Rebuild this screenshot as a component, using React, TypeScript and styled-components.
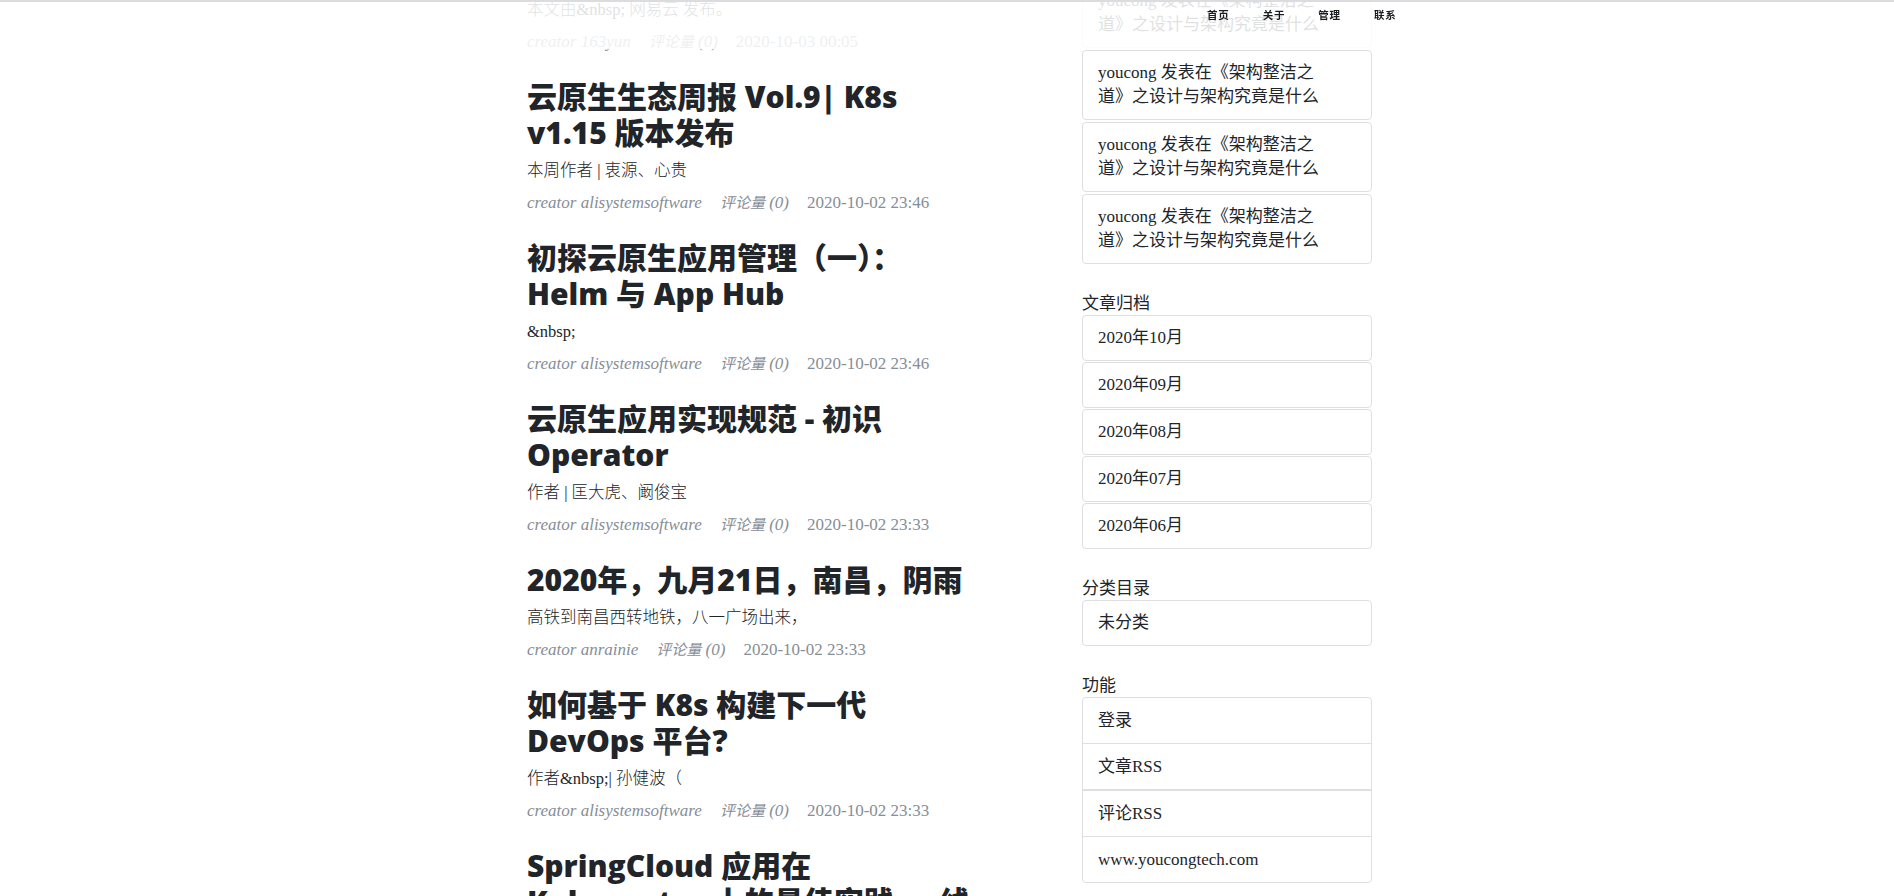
import React from "react";
import styled, { createGlobalStyle } from "styled-components";

const GlobalStyle = createGlobalStyle`
  html, body {
    margin: 0;
    padding: 0;
    overflow: hidden;
    background: #ffffff;
  }
  body {
    font-family: "Liberation Serif", "Noto Sans CJK SC", serif;
    color: #212529;
  }
  *, *::before, *::after { box-sizing: border-box; }
`;

const TopBar = styled.header`
  position: fixed;
  top: 0;
  left: 0;
  right: 0;
  height: 49px;
  background: rgba(255, 255, 255, 0.86);
  border-top: 2px solid #dcdce0;
  z-index: 10;
`;

const NavInner = styled.nav`
  width: 932px;
  margin: 0 auto;
  display: flex;
  justify-content: flex-end;
  padding-top: 6px;
`;

const NavLink = styled.a`
  font-family: "Open Sans", "Noto Sans CJK SC", sans-serif;
  font-size: 10.5px;
  font-weight: 700;
  letter-spacing: 0.8px;
  line-height: 14px;
  color: #1a1d20;
  padding: 0 16.5px;
  text-decoration: none;
`;

const Page = styled.div`
  width: 850px;
  margin: 0 auto;
  padding-left: 5px;
  display: flex;
  justify-content: space-between;
  align-items: flex-start;
`;

const Main = styled.main`
  width: 443px;
  margin-top: -2px;
`;

const Post = styled.article`
  margin-bottom: 25px;
`;

const PostTitle = styled.h2`
  font-family: "Open Sans", "Noto Sans CJK SC", sans-serif;
  font-weight: 800;
  font-size: 30px;
  line-height: 36px;
  margin: 0 0 8px;
  color: #212529;
`;

const PostSubtitle = styled.h3`
  font-family: "Liberation Serif", "Noto Sans CJK SC", serif;
  font-weight: 300;
  font-size: 16.5px;
  line-height: 24px;
  margin: 0 0 8px;
  color: #212529;
`;

const PostMeta = styled.p`
  display: flex;
  gap: 18px;
  margin: 0;
  font-family: "Liberation Serif", "Noto Sans CJK SC", serif;
  font-size: 17px;
  line-height: 24px;
  font-style: italic;
  color: #868e96;
  white-space: nowrap;
`;

const CountLabel = styled.span`
  font-size: 15px;
`;

const MetaDate = styled.span`
  font-style: normal;
`;

const Sidebar = styled.aside`
  width: 290px;
  margin-top: -22px;
`;

const Section = styled.section`
  margin-bottom: 26px;
`;

const SectionTitle = styled.h4`
  font-family: "Noto Sans CJK SC", sans-serif;
  font-weight: 400;
  font-size: 17px;
  line-height: 24px;
  margin: 0 0 1px;
  color: #212529;
`;

const Card = styled.div<{ $gap: number }>`
  border: 1px solid #dfdfdf;
  border-radius: 4px;
  padding: 10px 44px 10px 15px;
  font-size: 17px;
  line-height: 24px;
  color: #212529;
  margin-bottom: ${(p) => p.$gap}px;
  &:last-child {
    margin-bottom: 0;
  }
`;

const ListGroup = styled.div`
  display: flex;
  flex-direction: column;
`;

const ListItem = styled.div<{ $split?: boolean }>`
  border: 1px solid #dfdfdf;
  padding: 10.5px 24px 10.5px 15px;
  font-size: 17px;
  line-height: 24px;
  color: #212529;
  margin-top: ${(p) => (p.$split ? 0 : -1)}px;
  &:first-child {
    margin-top: 0;
    border-radius: 4px 4px 0 0;
  }
  &:last-child {
    border-radius: 0 0 4px 4px;
  }
`;

type PostData = {
  title?: string;
  subtitle: string;
  author: string;
  date: string;
};

const posts: PostData[] = [
  { subtitle: "本文由&nbsp; 网易云 发布。", author: "163yun", date: "2020-10-03 00:05" },
  {
    title: "云原生生态周报 Vol.9| K8s v1.15 版本发布",
    subtitle: "本周作者 | 衷源、心贵",
    author: "alisystemsoftware",
    date: "2020-10-02 23:46",
  },
  {
    title: "初探云原生应用管理（一）：Helm 与 App Hub",
    subtitle: "&nbsp;",
    author: "alisystemsoftware",
    date: "2020-10-02 23:46",
  },
  {
    title: "云原生应用实现规范 - 初识 Operator",
    subtitle: "作者 | 匡大虎、阚俊宝",
    author: "alisystemsoftware",
    date: "2020-10-02 23:33",
  },
  {
    title: "2020年，九月21日，南昌，阴雨",
    subtitle: "高铁到南昌西转地铁，八一广场出来，",
    author: "anrainie",
    date: "2020-10-02 23:33",
  },
  {
    title: "如何基于 K8s 构建下一代 DevOps 平台?",
    subtitle: "作者&nbsp;| 孙健波（",
    author: "alisystemsoftware",
    date: "2020-10-02 23:33",
  },
  {
    title: "SpringCloud 应用在 Kubernetes 上的最佳实践 — 线上发布（可监控）",
    subtitle: "作者 | 白庆",
    author: "alisystemsoftware",
    date: "2020-10-02 23:33",
  },
];

const comments = [0, 1, 2, 3];
const archives = ["2020年10月", "2020年09月", "2020年08月", "2020年07月", "2020年06月"];

export default function App() {
  return (
    <>
      <GlobalStyle />
      <TopBar>
        <NavInner>
          <NavLink href="#">首页</NavLink>
          <NavLink href="#">关于</NavLink>
          <NavLink href="#">管理</NavLink>
          <NavLink href="#">联系</NavLink>
        </NavInner>
      </TopBar>
      <Page>
        <Main>
          {posts.map((p, i) => (
            <Post key={i}>
              {p.title && <PostTitle>{p.title}</PostTitle>}
              <PostSubtitle>{p.subtitle}</PostSubtitle>
              <PostMeta>
                <span>creator {p.author}</span>
                <span>
                  <CountLabel>评论量</CountLabel> (0)
                </span>
                <MetaDate>{p.date}</MetaDate>
              </PostMeta>
            </Post>
          ))}
        </Main>
        <Sidebar>
          <Section>
            {comments.map((c) => (
              <Card key={c} $gap={2}>
                youcong 发表在《架构整洁之道》之设计与架构究竟是什么
              </Card>
            ))}
          </Section>
          <Section>
            <SectionTitle>文章归档</SectionTitle>
            {archives.map((a) => (
              <Card key={a} $gap={1}>
                {a}
              </Card>
            ))}
          </Section>
          <Section>
            <SectionTitle>分类目录</SectionTitle>
            <Card $gap={0}>未分类</Card>
          </Section>
          <Section>
            <SectionTitle>功能</SectionTitle>
            <ListGroup>
              <ListItem>登录</ListItem>
              <ListItem>文章RSS</ListItem>
              <ListItem $split>评论RSS</ListItem>
              <ListItem>www.youcongtech.com</ListItem>
            </ListGroup>
          </Section>
        </Sidebar>
      </Page>
    </>
  );
}
